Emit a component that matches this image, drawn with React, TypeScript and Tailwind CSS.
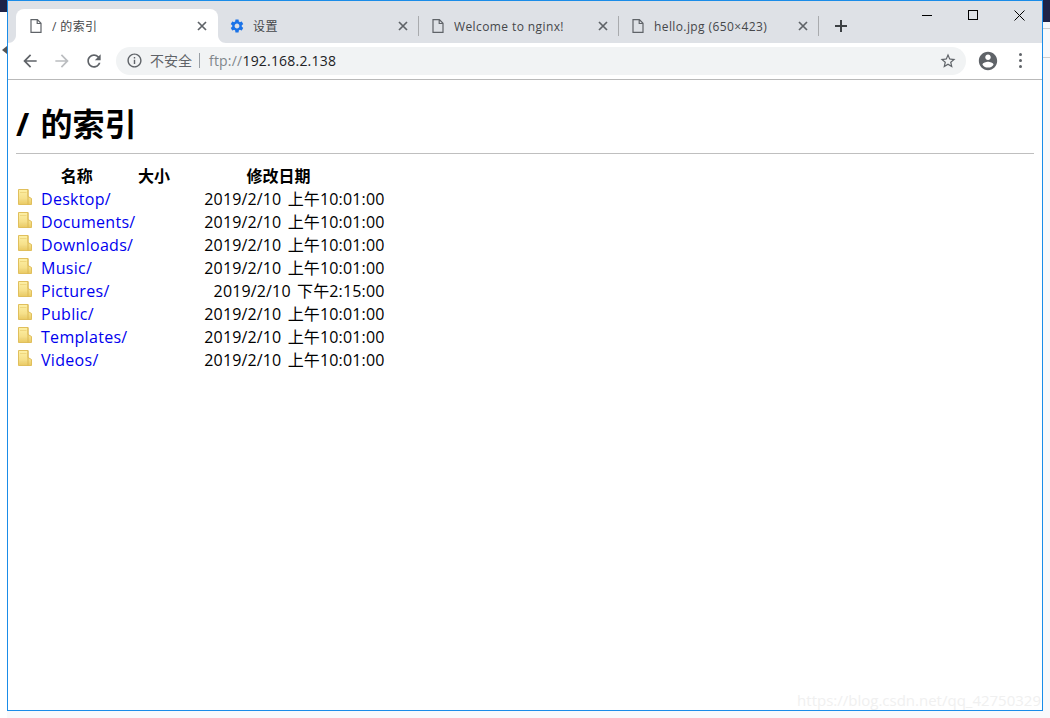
const FONT = "font-['Open_Sans','Noto_Sans_CJK_SC',sans-serif]";

function Mi({ d, size = 20, className = "" }: { d: string; size?: number; className?: string }) {
  return (
    <svg width={size} height={size} viewBox="0 0 24 24" fill="currentColor" className={className}>
      <path d={d} />
    </svg>
  );
}

const ICONS = {
  back: "M20 11H7.83l5.59-5.59L12 4l-8 8 8 8 1.41-1.41L7.83 13H20v-2z",
  forward: "M12 4l-1.41 1.41L16.17 11H4v2h12.17l-5.58 5.59L12 20l8-8z",
  reload:
    "M17.65 6.35C16.2 4.9 14.21 4 12 4c-4.42 0-7.99 3.58-7.99 8s3.57 8 7.99 8c3.73 0 6.84-2.55 7.73-6h-2.08c-.82 2.33-3.04 4-5.65 4-3.31 0-6-2.69-6-6s2.69-6 6-6c1.66 0 3.14.69 4.22 1.78L13 11h7V4l-2.35 2.35z",
  info: "M11 7h2v2h-2zm0 4h2v6h-2zm1-9C6.48 2 2 6.48 2 12s4.48 10 10 10 10-4.48 10-10S17.52 2 12 2zm0 18c-4.41 0-8-3.59-8-8s3.59-8 8-8 8 3.59 8 8-3.59 8-8 8z",
  star: "M22 9.24l-7.19-.62L12 2 9.19 8.63 2 9.24l5.46 4.73L5.82 21 12 17.27 18.18 21l-1.63-7.03L22 9.24zM12 15.4l-3.76 2.27 1-4.28-3.32-2.88 4.38-.38L12 6.1l1.71 4.04 4.38.38-3.32 2.88 1 4.28L12 15.4z",
  account:
    "M12 2C6.48 2 2 6.48 2 12s4.48 10 10 10 10-4.48 10-10S17.52 2 12 2zm0 3c1.66 0 3 1.34 3 3s-1.34 3-3 3-3-1.34-3-3 1.34-3 3-3zm0 14.2c-2.5 0-4.71-1.28-6-3.22.03-1.99 4-3.08 6-3.08 1.99 0 5.97 1.09 6 3.08-1.29 1.94-3.5 3.22-6 3.22z",
  gear: "M19.14 12.94c.04-.3.06-.61.06-.94 0-.32-.02-.64-.07-.94l2.03-1.58c.18-.14.23-.41.12-.61l-1.92-3.32c-.12-.22-.37-.29-.59-.22l-2.39.96c-.5-.38-1.03-.7-1.62-.94l-.36-2.54c-.04-.24-.24-.41-.48-.41h-3.84c-.24 0-.43.17-.47.41l-.36 2.54c-.59.24-1.13.57-1.62.94l-2.39-.96c-.22-.08-.47 0-.59.22L2.74 8.87c-.12.21-.08.47.12.61l2.03 1.58c-.05.3-.09.63-.09.94s.02.64.07.94l-2.03 1.58c-.18.14-.23.41-.12.61l1.92 3.32c.12.22.37.29.59.22l2.39-.96c.5.38 1.03.7 1.62.94l.36 2.54c.05.24.24.41.48.41h3.84c.24 0 .44-.17.47-.41l.36-2.54c.59-.24 1.13-.56 1.62-.94l2.39.96c.22.08.47 0 .59-.22l1.92-3.32c.12-.22.07-.47-.12-.61l-2.01-1.58zM12 15.6c-1.98 0-3.6-1.62-3.6-3.6s1.62-3.6 3.6-3.6 3.6 1.62 3.6 3.6-1.62 3.6-3.6 3.6z",
};

function PageIcon() {
  return (
    <svg width="12" height="14" viewBox="0 0 12 14" fill="none" stroke="#5f6368" strokeWidth="1.2" className="shrink-0">
      <path d="M1 .7h6.4L11 4.3v9H1zM7.2.7v3.8H11" />
    </svg>
  );
}

function CloseX() {
  return (
    <svg width="10" height="10" viewBox="0 0 10 10" stroke="#5f6368" strokeWidth="1.7" className="shrink-0">
      <path d="M1 1l8 8M9 1l-8 8" />
    </svg>
  );
}

function Tab({
  title,
  icon,
  active,
  divider,
  narrowIcon,
}: {
  title: string;
  icon: React.ReactNode;
  active?: boolean;
  divider?: boolean;
  narrowIcon?: boolean;
}) {
  return (
    <div
      className={`relative flex h-[34px] items-center ${
        active ? "w-[202px] rounded-t-[8px] bg-white pl-[14px] pr-[11px]" : "w-[200px] pl-[14px] pr-[10px]"
      }`}
    >
      {active && (
        <>
          <svg width="8" height="8" viewBox="0 0 8 8" className="absolute bottom-0 left-[-8px]">
            <path d="M8 0v8H0c4.500 0 8-3.500 8-8z" fill="#fff" />
          </svg>
          <svg width="8" height="8" viewBox="0 0 8 8" className="absolute bottom-0 right-[-8px]">
            <path d="M0 0v8H8C3.500 8 0 4.500 0 0z" fill="#fff" />
          </svg>
        </>
      )}
      <span className={`flex shrink-0 items-center ${narrowIcon ? "w-[21px]" : "w-[22px]"}`}>{icon}</span>
      <span className="mt-[2px] flex-1 truncate text-[12px] tracking-[0.4px] text-[#45474a]">{title}</span>
      <CloseX />
      {divider && <span className="absolute right-[-1px] top-[7px] h-[20px] w-px bg-[#a9abae]" />}
    </div>
  );
}

function FolderIcon() {
  return (
    <svg width="14" height="16" viewBox="0 0 14 16" className="shrink-0">
      <defs>
        <linearGradient id="fld" x1="0" y1="0" x2="0" y2="1">
          <stop offset="0" stopColor="#fdf0a6" />
          <stop offset="0.6" stopColor="#f6e08a" />
          <stop offset="1" stopColor="#e9c963" />
        </linearGradient>
      </defs>
      <path d="M.5.500h9.500v7l3.500 2v6H.5z" fill="url(#fld)" stroke="#e0bf5c" />
      <path d="M10 .5v15" stroke="#dcb955" />
      <path d="M2 3.500h6.500M2 11.500h7" stroke="#efd77f" />
    </svg>
  );
}

const rows = [
  { name: "Desktop/", date: "2019/2/10 上午10:01:00" },
  { name: "Documents/", date: "2019/2/10 上午10:01:00" },
  { name: "Downloads/", date: "2019/2/10 上午10:01:00" },
  { name: "Music/", date: "2019/2/10 上午10:01:00" },
  { name: "Pictures/", date: "2019/2/10 下午2:15:00" },
  { name: "Public/", date: "2019/2/10 上午10:01:00" },
  { name: "Templates/", date: "2019/2/10 上午10:01:00" },
  { name: "Videos/", date: "2019/2/10 上午10:01:00" },
];

export default function App() {
  return (
    <div className={`relative flex h-[718px] w-[1050px] overflow-hidden bg-[#f8f9fb] ${FONT}`}>
      {/* left strip of the window behind */}
      <div className="flex w-[7px] flex-col bg-white">
        <div className="h-[12px] bg-[#1f2347]" />
        <span className="mt-[34px] ml-[2px] h-0 w-0 border-y-[4px] border-r-[5px] border-y-transparent border-r-[#555]" />
      </div>

      <div className="flex h-[711px] w-[1036px] flex-col border border-[#1a8ce8]">
        {/* tab strip */}
        <div className="flex h-[42px] bg-[#dee1e6]">
          <div className="flex items-end pl-2">
            <Tab active title="/ 的索引" icon={<PageIcon />} />
            <Tab
              title="设置"
              icon={<Mi d={ICONS.gear} size={16} className="-ml-[3px] text-[#1a73e8]" />}
              divider
              narrowIcon
            />
            <Tab title="Welcome to nginx!" icon={<PageIcon />} divider />
            <Tab title="hello.jpg (650×423)" icon={<PageIcon />} divider />
            <div className="flex h-[34px] w-[46px] items-center justify-center">
              <svg width="12" height="12" viewBox="0 0 12 12" stroke="#3c4043" strokeWidth="2">
                <path d="M6 0v12M0 6h12" />
              </svg>
            </div>
          </div>
          <div className="ml-auto flex h-[28px]">
            <div className="flex w-[46px] items-center justify-center">
              <span className="h-px w-[10px] bg-black" />
            </div>
            <div className="flex w-[46px] items-center justify-center">
              <span className="h-[10px] w-[10px] border border-black" />
            </div>
            <div className="flex w-[46px] items-center justify-center">
              <svg width="11" height="11" viewBox="0 0 11 11" stroke="#000" strokeWidth="1">
                <path d="M.5.5l10 10M10.500.5l-10 10" />
              </svg>
            </div>
          </div>
        </div>

        {/* toolbar */}
        <div className="flex h-[37px] items-center border-b border-[#b9b9b9] bg-white pl-[6px] pb-px">
          <button className="flex w-8 justify-center text-[#5f6368]">
            <Mi d={ICONS.back} />
          </button>
          <button className="flex w-8 justify-center text-[#bbbdc0]">
            <Mi d={ICONS.forward} />
          </button>
          <button className="flex w-8 justify-center text-[#5f6368]">
            <Mi d={ICONS.reload} />
          </button>
          <div className="ml-[6px] flex h-[28px] w-[850px] items-center rounded-full bg-[#f1f3f4] pl-[10px] pr-[9px]">
            <Mi d={ICONS.info} size={17} className="text-[#5f6368]" />
            <span className="ml-[7px] text-[14px] text-[#5f6368]">不安全</span>
            <span className="ml-[7px] mr-[9px] h-[15px] w-px bg-[#9aa0a6]" />
            <span className="text-[14px] tracking-[0.2px] text-[#202124]">
              <span className="text-[#80868b]">ftp://</span>192.168.2.138
            </span>
            <Mi d={ICONS.star} size={18} className="ml-auto text-[#5f6368]" />
          </div>
          <button className="ml-[10px] flex w-[24px] justify-center text-[#5f6368]">
            <Mi d={ICONS.account} size={22} />
          </button>
          <button className="ml-[8px] flex w-[24px] flex-col items-center gap-[3px]">
            <span className="h-[3px] w-[3px] rounded-full bg-[#5f6368]" />
            <span className="h-[3px] w-[3px] rounded-full bg-[#5f6368]" />
            <span className="h-[3px] w-[3px] rounded-full bg-[#5f6368]" />
          </button>
        </div>

        {/* page */}
        <div className="flex-1 bg-white px-2 pt-[22px] text-[16px] text-black">
          <h1 className="text-[32px] leading-[44px] font-bold [word-spacing:3px]">/ 的索引</h1>
          <hr className="mt-[7px] border-t border-[#bfbfbf]" />
          <table className="mt-[10px] border-separate border-spacing-[2px]">
            <thead>
              <tr>
                <th className="h-[21px] w-[117px] p-0 text-center leading-[21px] font-bold">名称</th>
                <th className="h-[21px] w-[33px] p-0 text-center leading-[21px] font-bold">大小</th>
                <th className="h-[21px] w-[212px] p-0 text-center leading-[21px] font-bold">修改日期</th>
              </tr>
            </thead>
            <tbody>
              {rows.map((r) => (
                <tr key={r.name}>
                  <td className="h-[21px] p-0 leading-[21px] tracking-[0.3px]">
                    <div className="flex items-center">
                      <span className="-mt-[5px] mr-[9px]">
                        <FolderIcon />
                      </span>
                      <a className="text-[#0000ee]">{r.name}</a>
                    </div>
                  </td>
                  <td className="p-0" />
                  <td className="h-[21px] p-0 text-right leading-[21px] tracking-[0.15px] whitespace-nowrap [word-spacing:2px]">
                    {r.date}
                  </td>
                </tr>
              ))}
            </tbody>
          </table>
        </div>
      </div>

      {/* right strip of the window behind */}
      <div className="flex w-[7px] flex-col">
        <div className="h-[22px] bg-[#1f2347]" />
        <div className="mt-[6px] h-px bg-[#cfcfcf]" />
        <div className="mt-[28px] h-px bg-[#cfcfcf]" />
      </div>

      <span className="absolute right-[9px] bottom-[7px] text-[15px] text-[#f0f0f0]">
        https://blog.csdn.net/qq_42750329
      </span>
    </div>
  );
}
